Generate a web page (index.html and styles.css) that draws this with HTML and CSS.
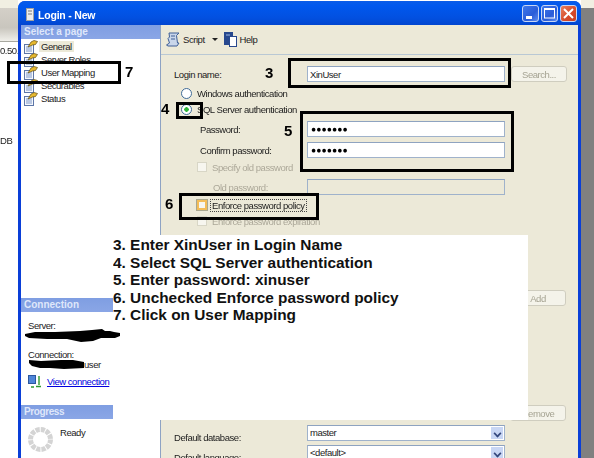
FILE: index.html
```html
<!DOCTYPE html>
<html lang="en">
<head>
    <meta charset="UTF-8">
    <title>Login - New</title>
    <link rel="stylesheet" href="styles.css">
</head>
<body>

<svg width="0" height="0" class="defs">
    <symbol id="page-icon" viewBox="0 0 14 14">
        <rect x="0.5" y="4.5" width="9" height="9" fill="#f4f7fc" stroke="#5d76a8"/>
        <path d="M2 7h6M2 9h6M2 11h6" stroke="#7f98c8"/>
        <path d="M4 7l3-5 3-1.500 3.500 1-2 3-3 .5z" fill="#e6b82e" stroke="#5e4c14" stroke-width="0.7"/>
    </symbol>
</svg>

<div class="desktop">
    <div class="strip-left">
        <div class="strip-head"></div>
        <div class="strip-num">0.50.</div>
        <div class="strip-db">DB</div>
    </div>

    <div class="window">
        <div class="titlebar">
            <svg class="title-icon" width="8" height="13" viewBox="0 0 8 13">
                <rect x="0.5" y="0.5" width="7" height="12" fill="#ececec" stroke="#a0a0a0"/>
                <path d="M2 3h4M2 6h4" stroke="#777"/>
            </svg>
            <span class="title-text">Login - New</span>
            <div class="title-buttons">
                <div class="tbtn">
                    <svg width="15" height="15" viewBox="0 0 15 15"><rect x="3" y="10" width="6" height="3" fill="#fff"/></svg>
                </div>
                <div class="tbtn">
                    <svg width="15" height="15" viewBox="0 0 15 15"><rect x="2.500" y="3" width="10" height="9" fill="none" stroke="#fff"/><rect x="2" y="2" width="11" height="2" fill="#fff"/></svg>
                </div>
                <div class="tbtn tbtn-close">
                    <svg width="15" height="15" viewBox="0 0 15 15"><path d="M3 3l9 9M12 3l-9 9" stroke="#fff" stroke-width="2"/></svg>
                </div>
            </div>
        </div>

        <div class="body">
            <div class="sidebar">
                <div class="side-head">Select a page</div>
                <ul class="pages">
                    <li><svg class="page-ico"><use href="#page-icon"/></svg><span class="page-active">General</span></li>
                    <li><svg class="page-ico"><use href="#page-icon"/></svg><span>Server Roles</span></li>
                    <li><svg class="page-ico"><use href="#page-icon"/></svg><span>User Mapping</span></li>
                    <li><svg class="page-ico"><use href="#page-icon"/></svg><span>Securables</span></li>
                    <li><svg class="page-ico"><use href="#page-icon"/></svg><span>Status</span></li>
                </ul>

                <div class="side-head head-connection">Connection</div>
                <div class="conn">
                    <div>Server:</div>
                    <div class="conn-label2">Connection:</div>
                    <div class="conn-user">user</div>
                    <div class="conn-link">
                        <svg width="14" height="13" viewBox="0 0 14 13">
                            <rect x="0.5" y="0.5" width="7" height="8" fill="#4f86d8" stroke="#2b57a0"/>
                            <path d="M11 1v9M8 11.500h5M6 12h-3" stroke="#2e9a2e" stroke-width="1.400" fill="none"/>
                        </svg>
                        <a href="#">View connection</a>
                    </div>
                </div>

                <div class="side-head head-progress">Progress</div>
                <div class="progress">
                    <svg width="25" height="25" viewBox="0 0 25 25">
                        <circle cx="12.500" cy="12.500" r="10" fill="none" stroke="#d4d4d4" stroke-width="5" stroke-dasharray="4.200 1.030"/>
                    </svg>
                    <span>Ready</span>
                </div>
            </div>

            <div class="main">
                <div class="toolbar">
                    <svg width="14" height="15" viewBox="0 0 14 15">
                        <path d="M3 1h10l-2.500 2.500 1 7.500H13l-2 3H2l-1.500-1 3-2-1.500-4.500 1.500-1.500z" fill="#c9d6ea" stroke="#3f5f96"/>
                        <path d="M5 4h4M5 7h4" stroke="#3f5f96"/>
                    </svg>
                    <span class="tool-label">Script</span>
                    <span class="tool-caret"></span>
                    <svg class="help-ico" width="13" height="15" viewBox="0 0 13 15">
                        <rect x="0" y="0" width="9" height="13" fill="#27488e"/>
                        <rect x="5.500" y="4.500" width="7" height="10" fill="#fff" stroke="#27488e"/>
                        <path d="M2 3h4" stroke="#9fb6e0"/>
                    </svg>
                    <span class="tool-label">Help</span>
                </div>

                <div class="form">
                    <div class="row row-login">
                        <label class="lbl-main">Login name:</label>
                        <input class="field" type="text" value="XinUser" readonly>
                        <button class="btn">Search...</button>
                    </div>
                    <div class="radio-row row-win"><span class="radio"></span>Windows authentication</div>
                    <div class="radio-row row-sql"><span class="radio radio-on"></span>SQL Server authentication</div>
                    <div class="row row-pass">
                        <label class="lbl-sub">Password:</label>
                        <div class="field dots">●●●●●●●</div>
                    </div>
                    <div class="row row-confirm">
                        <label class="lbl-sub">Confirm password:</label>
                        <div class="field dots">●●●●●●●</div>
                    </div>
                    <div class="check-row row-specify off"><span class="check"></span>Specify old password</div>
                    <div class="row row-old">
                        <label class="lbl-old off">Old password:</label>
                        <div class="field field-off"></div>
                    </div>
                    <div class="check-row row-enforce"><span class="check check-hot"></span><span class="focus">Enforce password policy</span></div>
                    <div class="check-row row-expire off"><span class="check"></span>Enforce password expiration</div>
                    <div class="btn-row row-add"><button class="btn">Add</button></div>
                    <div class="btn-row row-remove"><button class="btn">Remove</button></div>
                    <div class="row row-db">
                        <label class="lbl-main lbl-low">Default database:</label>
                        <div class="field select">master<span class="arrow"></span></div>
                    </div>
                    <div class="row row-lang">
                        <label class="lbl-main lbl-low">Default language:</label>
                        <div class="field select">&lt;default&gt;<span class="arrow"></span></div>
                    </div>
                </div>
            </div>
        </div>
    </div>

    <div class="strip-right"></div>

    <div class="notes">
        <div>3. Enter XinUser in Login Name</div>
        <div>4. Select SQL Server authentication</div>
        <div>5. Enter password: xinuser</div>
        <div>6. Unchecked Enforce password policy</div>
        <div>7. Click on User Mapping</div>
    </div>

    <!-- annotations drawn over the screenshot -->
    <div class="mark mark-3"></div>
    <div class="mark mark-4"></div>
    <div class="mark mark-5"></div>
    <div class="mark mark-6"></div>
    <div class="mark mark-7"></div>
    <span class="num num-3">3</span>
    <span class="num num-4">4</span>
    <span class="num num-5">5</span>
    <span class="num num-6">6</span>
    <span class="num num-7">7</span>

    <svg class="scribble scribble-server" width="96" height="14" viewBox="0 0 96 14">
        <path d="M0 6l10-2 20 0 25-1 12-1 10-1 3 2 5 0 4 1 6 1 0 3-5 2-14 0-8 3-12 1-14-3-20 0-18-1-4-2z" fill="#000"/>
    </svg>
    <svg class="scribble scribble-conn" width="58" height="10" viewBox="0 0 58 10">
        <path d="M1 1l12 1 20-1 12 0 11 2 0 6-20 1-14-1-10 0-8-2-3-3z" fill="#000"/>
    </svg>
</div>

</body>
</html>
```

FILE: styles.css
```css
* {
    box-sizing: border-box;
}
body {
    margin: 0;
    background-color: #fff;
    font-family: 'Liberation Sans', Arial, sans-serif;
    font-size: 9.5px;
    letter-spacing: -0.45px;
    color: #1c1c1c;
}
.defs {
    position: absolute;
}
.desktop {
    position: relative;
    display: flex;
    width: 594px;
    height: 458px;
    overflow: hidden;
    filter: blur(0.3px);
}
.strip-left {
    width: 18px;
    flex-shrink: 0;
    white-space: nowrap;
    overflow: hidden;
}
.strip-head {
    height: 42px;
    border-top: 8px solid #f1efe2;
    border-bottom: 1px solid #a8a8a0;
    background: linear-gradient(#d4d0c8, #c9c6be 60%, #f0efea);
}
.strip-num {
    margin-top: 3px;
    line-height: 12px;
}
.strip-db {
    margin-top: 78px;
    line-height: 12px;
}
.strip-right {
    width: 13px;
    flex-shrink: 0;
    background: linear-gradient(#f1efe2 8px, #808080 8px);
}
.window {
    width: 563px;
    flex-shrink: 0;
    margin-top: 1px;
    display: flex;
    flex-direction: column;
    background-color: #0a3fd8;
    border-radius: 7px 7px 0 0;
    padding: 0 3px;
}
.titlebar {
    height: 24px;
    flex-shrink: 0;
    margin: 0 -3px;
    padding: 0 4px 0 7px;
    display: flex;
    align-items: center;
    border-radius: 7px 7px 0 0;
    background: linear-gradient(#0a5ce8, #0058ee 20%, #0250e0 70%, #0246d0);
}
.title-icon {
    margin: 2px 0 0 1px;
}
.title-text {
    margin: 3px 0 0 4px;
    font-size: 10.5px;
    font-weight: bold;
    letter-spacing: -0.2px;
    color: #fff;
}
.title-buttons {
    margin-left: auto;
    display: flex;
    gap: 2px;
}
.tbtn {
    width: 17px;
    height: 17px;
    display: flex;
    align-items: center;
    justify-content: center;
    border: 1px solid #c8d6f4;
    border-radius: 3px;
    background: linear-gradient(135deg, #3f78ea, #2a5cd8 60%, #5d8cf0);
}
.tbtn-close {
    background: linear-gradient(135deg, #e8805c, #d5492a 60%, #c83e20);
}
.body {
    flex: 1;
    display: flex;
    min-height: 0;
    background-color: #ece9d8;
}
.sidebar {
    width: 140px;
    flex-shrink: 0;
    background-color: #fff;
    border-right: 1px solid #8ea3c4;
}
.side-head {
    height: 14px;
    line-height: 14px;
    padding-left: 3px;
    font-size: 10px;
    font-weight: bold;
    letter-spacing: 0;
    color: #dfe7fa;
    background: linear-gradient(#7f9ee2, #8aa6e6);
}
.head-connection {
    width: 92px;
}
.head-progress {
    width: 92px;
    letter-spacing: -0.4px;
}
.pages {
    list-style: none;
    margin: 0;
    padding: 1px 0 0 3px;
    height: 259px;
}
.pages li {
    height: 13px;
    display: flex;
    align-items: center;
    gap: 1px;
    white-space: nowrap;
}
.page-ico {
    width: 14px;
    height: 14px;
    margin-right: 2px;
    flex-shrink: 0;
}
.page-active {
    background-color: #ece9d8;
    padding: 0 2px;
    margin-left: -2px;
}
.conn {
    padding: 8px 0 0 7px;
    height: 93px;
    line-height: 12px;
}
.conn-label2 {
    margin-top: 17px;
}
.conn-user {
    margin: -2px 0 0 56px;
    line-height: 11px;
}
.conn-link {
    display: flex;
    align-items: center;
    gap: 5px;
    margin-top: 5px;
    white-space: nowrap;
}
.conn-link a {
    color: #0000e0;
}
.progress {
    padding: 8px 0 0 7px;
    display: flex;
    gap: 7px;
}
.main {
    flex: 1;
    display: flex;
    flex-direction: column;
}
.toolbar {
    height: 30px;
    flex-shrink: 0;
    padding: 0 0 1px 5px;
    display: flex;
    align-items: center;
    border-bottom: 1px solid #b9c8d4;
}
.tool-label {
    margin-left: 3px;
}
.tool-caret {
    margin-left: 7px;
    border-top: 3px solid #222;
    border-left: 3px solid transparent;
    border-right: 3px solid transparent;
}
.help-ico {
    margin-left: 6px;
}
.form {
    padding-top: 11px;
}
.row {
    display: flex;
    align-items: center;
    height: 16px;
}
.row label {
    white-space: nowrap;
}
.lbl-main {
    margin-left: 13px;
    width: 133px;
}
.lbl-low {
    padding-top: 8px;
}
.lbl-sub {
    margin-left: 39px;
    width: 107px;
}
.lbl-old {
    margin-left: 52px;
    width: 94px;
}
.field {
    width: 198px;
    height: 16px;
    flex-shrink: 0;
    padding: 0 2px;
    border: 1px solid #9fb2cb;
    border-top-color: #8ea3c0;
    background-color: #fff;
    font-family: inherit;
    font-size: 9.5px;
    letter-spacing: inherit;
    color: #1c1c1c;
    line-height: 14px;
    outline: none;
}
.field-off {
    background-color: #ece9d8;
}
.dots {
    padding-left: 3px;
    font-size: 8.5px;
    letter-spacing: 0.1px;
    color: #000;
}
.select {
    position: relative;
}
.arrow {
    position: absolute;
    right: 1px;
    top: 1px;
    bottom: 1px;
    width: 12px;
    background-color: #c8d6f4;
}
.arrow::after {
    content: "";
    position: absolute;
    left: 3px;
    top: 3px;
    width: 5px;
    height: 5px;
    border-right: 2px solid #34477c;
    border-bottom: 2px solid #34477c;
    transform: scale(0.8) rotate(45deg);
}
.btn {
    width: 56px;
    height: 16px;
    margin-left: 6px;
    padding: 0;
    border: 1px solid #cfcdbf;
    border-radius: 3px;
    background-color: #f4f3ea;
    font-family: inherit;
    font-size: 9.5px;
    letter-spacing: inherit;
    color: #a5a392;
}
.radio-row, .check-row {
    display: flex;
    align-items: center;
    white-space: nowrap;
    height: 14px;
}
.radio {
    width: 11px;
    height: 11px;
    margin-right: 5px;
    flex-shrink: 0;
    border: 1px solid #3f6a96;
    border-radius: 50%;
    background-color: #fff;
}
.radio-on {
    background: radial-gradient(circle, #2fb53a 0 2px, #fff 2.5px);
}
.row-win {
    margin: 4px 0 0 20px;
}
.row-sql {
    margin: 2px 0 0 20px;
}
.row-pass {
    margin-top: 5px;
}
.row-confirm {
    margin-top: 5px;
}
.check-row {
    margin-left: 36px;
}
.check {
    width: 10px;
    height: 10px;
    margin-right: 5px;
    flex-shrink: 0;
    background-color: #f7f6ef;
    border: 1px solid #d8d6c6;
}
.check-hot {
    border: 2px solid #f4bd58;
    outline: 1px solid #a9a78f;
}
.focus {
    outline: 1px dotted #444;
    padding: 0 1px;
    margin-left: -1px;
}
.off {
    color: #aca899;
}
.row-specify {
    margin-top: 2px;
}
.row-old {
    margin-top: 5px;
}
.row-enforce {
    margin-top: 3px;
}
.row-expire {
    margin-top: 2px;
}
.btn-row {
    padding-left: 343px;
}
.row-add {
    margin-top: 62px;
}
.row-remove {
    margin-top: 99px;
}
.row-db {
    margin-top: 4px;
}
.row-lang {
    margin-top: 4px;
}
.mark {
    position: absolute;
    border: 3px solid #000;
}
.mark-3 {
    left: 288px;
    top: 58px;
    width: 223px;
    height: 30px;
}
.mark-4 {
    left: 176px;
    top: 102px;
    width: 27px;
    height: 17px;
}
.mark-5 {
    left: 300px;
    top: 111px;
    width: 214px;
    height: 61px;
}
.mark-6 {
    left: 179px;
    top: 193px;
    width: 140px;
    height: 27px;
}
.mark-7 {
    left: 7px;
    top: 61px;
    width: 114px;
    height: 23px;
}
.num {
    position: absolute;
    font-size: 15px;
    font-weight: bold;
    letter-spacing: 0;
    color: #000;
    line-height: 16px;
}
.num-3 {
    left: 265px;
    top: 65px;
}
.num-4 {
    left: 161px;
    top: 101px;
}
.num-5 {
    left: 284px;
    top: 123px;
}
.num-6 {
    left: 165px;
    top: 196px;
}
.num-7 {
    left: 125px;
    top: 64px;
}
.scribble {
    position: absolute;
}
.scribble-server {
    left: 25px;
    top: 328px;
}
.scribble-conn {
    left: 28px;
    top: 359px;
}
.notes {
    position: absolute;
    left: 113px;
    top: 235px;
    width: 415px;
    height: 185px;
    padding-top: 1px;
    background-color: #fff;
    font-size: 15.4px;
    font-weight: bold;
    letter-spacing: 0;
    color: #111;
    line-height: 17.5px;
}
```
